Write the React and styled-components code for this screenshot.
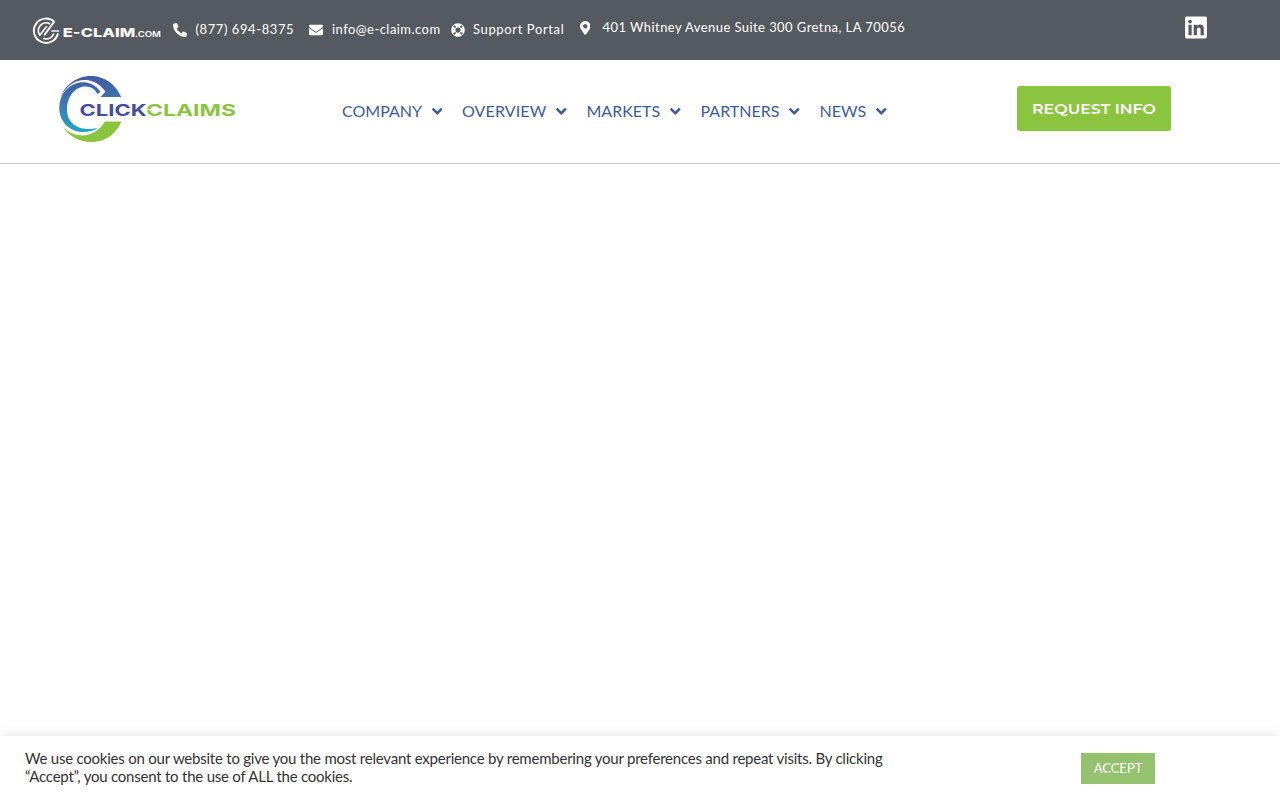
import styled, { createGlobalStyle } from 'styled-components';
import {
  FaAngleDown,
  FaEnvelope,
  FaLifeRing,
  FaLinkedin,
  FaMapMarkerAlt,
  FaPhoneAlt,
} from 'react-icons/fa';

const GlobalStyle = createGlobalStyle`
  * {
    box-sizing: border-box;
  }

  body {
    margin: 0;
    background-color: #fff;
    font-family: Lato, sans-serif;
    overflow: hidden;
  }
`;

const Page = styled.div`
  display: flex;
  flex-direction: column;
  height: 100vh;
`;

const TopBar = styled.div`
  display: flex;
  align-items: flex-start;
  flex: none;
  height: 60px;
  padding: 14px 73px 0 30px;
  background-color: #555960;
  color: #fff;

  .linkedin {
    margin: 1px 0 0 auto;
    font-size: 25px;
    width: 22px;
  }
`;

const ContactItem = styled.a`
  display: flex;
  align-items: center;
  flex: none;
  width: ${(props) => props.$width}px;
  height: 20px;
  margin-top: ${(props) => props.$top}px;
  font-size: 13px;
  letter-spacing: ${(props) => props.$spacing}px;
  white-space: nowrap;

  svg {
    flex: none;
    width: ${(props) => props.$icon}px;
    height: 14px;
    margin: 1px ${(props) => props.$gap}px 0 0;
  }
`;

const Header = styled.header`
  display: flex;
  align-items: flex-start;
  flex: none;
  height: 104px;
  padding: 12px 109px 0 55px;
  border-bottom: 1px solid #c8c8c8;
`;

const Nav = styled.nav`
  display: flex;
  margin: 26px 0 0 102px;
`;

const NavItem = styled.a`
  display: flex;
  align-items: center;
  width: ${(props) => props.$width}px;
  height: 24px;
  color: #3d5b9f;
  font-size: 16px;
  letter-spacing: ${(props) => props.$spacing || 0}px;
  white-space: nowrap;

  svg {
    flex: none;
    width: 10.5px;
    height: 16.8px;
    margin: 2px 0 0 10px;
  }
`;

const RequestButton = styled.button`
  display: flex;
  align-items: center;
  justify-content: center;
  width: 154px;
  height: 45px;
  margin: 14px 0 0 auto;
  padding: 0;
  border: 0;
  border-radius: 3px;
  background-color: #8bc53f;
  color: #fff;
  font-family: Montserrat, Inter, sans-serif;
  font-size: 15px;
  font-weight: 600;

  svg {
    display: block;
  }
`;

const CookieBar = styled.div`
  display: flex;
  align-items: flex-start;
  flex: none;
  height: 64px;
  margin-top: auto;
  padding: 13px 125px 0 25px;
  background-color: #fff;
  box-shadow: 0 -1px 10px 0 rgba(172, 171, 171, 0.3);
  color: #333;

  p {
    width: 885px;
    margin: 0;
    font-size: 15px;
    letter-spacing: -0.225px;
    line-height: 18px;
  }
`;

const AcceptButton = styled.button`
  width: 74px;
  height: 31px;
  margin: 4px 0 0 auto;
  padding: 0 0 2px;
  border: 0;
  background-color: #95c26f;
  color: #fff;
  font-family: inherit;
  font-size: 13px;
`;

const contacts = [
  { label: '(877) 694-8375', Icon: FaPhoneAlt, width: 136, icon: 14, gap: 8.5, top: 5, spacing: 0.58 },
  { label: 'info@e-claim.com', Icon: FaEnvelope, width: 142, icon: 14, gap: 9, top: 5, spacing: 0.45 },
  { label: 'Support Portal', Icon: FaLifeRing, width: 128.5, icon: 14, gap: 8, top: 5, spacing: 0.63 },
  { label: '401 Whitney Avenue Suite 300 Gretna, LA 70056', Icon: FaMapMarkerAlt, width: 330, icon: 10.5, gap: 12.5, top: 3, spacing: 0.43 },
];

const links = [
  { label: 'COMPANY', width: 120 },
  { label: 'OVERVIEW', width: 124.5, spacing: 0.12 },
  { label: 'MARKETS', width: 114 },
  { label: 'PARTNERS', width: 119 },
  { label: 'NEWS', width: 70 },
];

const logoText = {
  fontFamily: 'Inter, sans-serif',
  fontWeight: 700,
  lengthAdjust: 'spacingAndGlyphs',
};

function EClaimLogo() {
  return (
    <svg width="143" height="34" viewBox="30 14 143 34" fill="none">
      <g stroke="#fff" strokeWidth="1.9" transform="translate(0.2 0.8)">
        <path d="M54.2 21A12.2 12.2 0 1 0 57.8 32.5" />
        <path d="M51 30.2H59" strokeWidth="1.4" />
        <path d="M54.2 20.6L44 34.4" />
        <path d="M50 23.2A7.8 7.8 0 0 0 39.6 34.4L46.6 25.5" strokeWidth="1.7" />
        <path d="M43 37.4C47.5 39.4 52.2 37 53.6 32.8" strokeWidth="1.7" />
      </g>
      <g fill="#fff">
        <text x="62.8" y="37.2" fontSize="12" textLength="72.5" {...logoText} fontWeight="800">E-CLAIM</text>
        <text x="135" y="37.2" fontSize="7.7" textLength="26" {...logoText} fontWeight="600">.COM</text>
      </g>
    </svg>
  );
}

function ClickClaimsLogo() {
  return (
    <svg width="185" height="76" viewBox="55 72 185 76">
      <defs>
        <linearGradient id="ring" gradientUnits="userSpaceOnUse" x1="0" y1="76" x2="0" y2="132">
          <stop offset="0" stopColor="#4659a3" />
          <stop offset="0.55" stopColor="#397cb3" />
          <stop offset="1" stopColor="#24a8c4" />
        </linearGradient>
      </defs>
      <path
        d="M121.3 97C114 81 101 76 91 76C76 76 64 86 61 97C66 86 75 79.5 86 80C96 80.5 102 87 105.5 91.5L100.5 97Z"
        fill="url(#ring)"
      />
      <path
        d="M100.5 92C94 82 83 81 76 83.5C65 87 59.3 97 59.3 108C59.3 122 70 132 83 132C89 132 94 130.5 98 128C88 130 81 129 76 126C69 122 66.5 115 67 107C68 96 75 87.5 84 86.5C91 86 95 89 97.5 94Z"
        fill="url(#ring)"
      />
      <path d="M63 127C75 139 94 139 105 121.5H121.5C115 136 104 142 91.5 142C79 142 69 136 63 127Z" fill="#8bc53f" />
      <text x="79.5" y="115.8" fontSize="16" textLength="67" fill="#434e9e" {...logoText}>CLICK</text>
      <text x="146" y="115.8" fontSize="16" textLength="90" fill="#8bc53f" {...logoText}>CLAIMS</text>
      <path d="M146 109.7H153" stroke="#fff" strokeWidth="1" />
    </svg>
  );
}

function App() {
  return (
    <Page>
      <GlobalStyle />
      <TopBar>
        <EClaimLogo />
        {contacts.map(({ label, Icon, width, icon, gap, top, spacing }) => (
          <ContactItem key={label} $width={width} $icon={icon} $gap={gap} $top={top} $spacing={spacing}>
            <Icon />
            {label}
          </ContactItem>
        ))}
        <FaLinkedin className="linkedin" />
      </TopBar>
      <Header>
        <ClickClaimsLogo />
        <Nav>
          {links.map(({ label, width, spacing }) => (
            <NavItem key={label} $width={width} $spacing={spacing}>
              {label}
              <FaAngleDown />
            </NavItem>
          ))}
        </Nav>
        <RequestButton>
          <svg width="124" height="20" fill="#fff">
            <text x="0" y="14.7" textLength="124" lengthAdjust="spacingAndGlyphs">REQUEST INFO</text>
          </svg>
        </RequestButton>
      </Header>
      <CookieBar>
        <p>
          We use cookies on our website to give you the most relevant experience by remembering your
          preferences and repeat visits. By clicking “Accept”, you consent to the use of ALL the cookies.
        </p>
        <AcceptButton>ACCEPT</AcceptButton>
      </CookieBar>
    </Page>
  );
}

export default App;
